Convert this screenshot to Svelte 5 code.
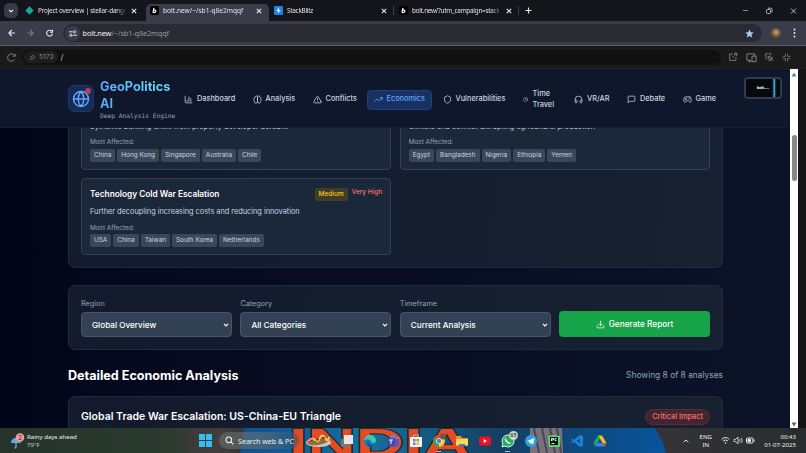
<script lang="ts">
    const tabs = [
        { icon: 'diamond', title: 'Project overview | stellar-dango' },
        { icon: 'bolt', title: 'bolt.new/~/sb1-q8e2mqqf', active: true },
        { icon: 'blitz', title: 'StackBlitz' },
        { icon: 'bolt', title: 'bolt.new/?utm_campaign=stack' },
    ];

    const nav = [
        { label: 'Dashboard', icon: 'chart', width: 68.5 },
        { label: 'Analysis', icon: 'brain', width: 60 },
        { label: 'Conflicts', icon: 'warn', width: 62 },
        { label: 'Economics', icon: 'trend', width: 65, active: true },
        { label: 'Vulnerabilities', icon: 'shield', width: 80 },
        { label: 'Time Travel', icon: 'clock', width: 51.5, wrap: true },
        { label: 'VR/AR', icon: 'phones', width: 53 },
        { label: 'Debate', icon: 'chat', width: 55.5 },
        { label: 'Game', icon: 'pad', width: 50 },
    ];

    const paths: Record<string, string> = {
        chart: 'M3 3v16a2 2 0 0 0 2 2h16M8 17v-3M13 17V5M18 17V9',
        brain: 'M12 5a3 3 0 1 0-6 .1 4 4 0 0 0-2.5 5.8 4 4 0 0 0 .5 6.6A4 4 0 1 0 12 18ZM12 5a3 3 0 1 1 6 .1 4 4 0 0 1 2.5 5.8 4 4 0 0 1-.5 6.6A4 4 0 1 1 12 18Z',
        warn: 'm21.7 18-8-14a2 2 0 0 0-3.5 0l-8 14A2 2 0 0 0 4 21h16a2 2 0 0 0 1.7-3ZM12 9v4M12 17h.01',
        trend: 'M22 7l-8.5 8.5-5-5L2 17M16 7h6v6',
        shield: 'M20 13c0 5-3.5 7.5-7.7 9a1 1 0 0 1-.6 0C7.5 20.5 4 18 4 13V6a1 1 0 0 1 1-1c2 0 4.5-1.2 6.2-2.7a1.2 1.2 0 0 1 1.5 0C14.5 3.8 17 5 19 5a1 1 0 0 1 1 1Z',
        clock: 'M22 12a10 10 0 1 1-20 0 10 10 0 0 1 20 0ZM12 6v6l4 2',
        phones: 'M3 14h3a2 2 0 0 1 2 2v3a2 2 0 0 1-2 2H5a2 2 0 0 1-2-2v-7a9 9 0 0 1 18 0v7a2 2 0 0 1-2 2h-1a2 2 0 0 1-2-2v-3a2 2 0 0 1 2-2h3',
        chat: 'M21 15a2 2 0 0 1-2 2H7l-4 4V5a2 2 0 0 1 2-2h14a2 2 0 0 1 2 2Z',
        pad: 'M6 11h4M8 9v4M15 12h.01M18 10h.01M17.3 5H6.7a4 4 0 0 0-4 3.6L2 16a3 3 0 0 0 5 2l2-2h6l2 2a3 3 0 0 0 5-2l-.7-7.4a4 4 0 0 0-4-3.6Z',
        download: 'M21 15v4a2 2 0 0 1-2 2H5a2 2 0 0 1-2-2v-4M7 10l5 5 5-5M12 15V3',
        globe: 'M22 12a10 10 0 1 1-20 0 10 10 0 0 1 20 0ZM12 2a15 15 0 0 0 0 20 15 15 0 0 0 0-20M2 12h20',
        plug: 'M3 21l4-4M9 8l7 7-2 2c-2 2-5 2-7 0s-2-5 0-7ZM9 8c3-4 7-5 9-2s1 6-2 9',
        external: 'M11 5H4v15h15v-7M15 3h6v6M21 3L11 13',
        devices: 'M10 18H2V4h17v4M6 21h5M14 9h8v12h-8Z',
        inspect: 'M10 10l11 4-5 2-2 5ZM4 12V4h4M12 4h4v3M4 15l3 1M17 17l4 4',
        shrink: 'M9 3v6H3M15 3v6h6M9 21v-6H3M15 21v-6h6',
    };

    const risks = [
        {
            title: 'China Real Estate Collapse',
            text: 'Systemic banking crisis from property developer defaults',
            places: ['China', 'Hong Kong', 'Singapore', 'Australia', 'Chile'],
        },
        {
            title: 'Global Food Crisis',
            text: 'Climate and conflict disrupting agricultural production',
            places: ['Egypt', 'Bangladesh', 'Nigeria', 'Ethiopia', 'Yemen'],
        },
        {
            title: 'Technology Cold War Escalation',
            text: 'Further decoupling increasing costs and reducing innovation',
            places: ['USA', 'China', 'Taiwan', 'South Korea', 'Netherlands'],
        },
    ];

    const filters = [
        { label: 'Region', value: 'Global Overview' },
        { label: 'Category', value: 'All Categories' },
        { label: 'Timeframe', value: 'Current Analysis' },
    ];

    const apps = ['view', 'edge', 'teams', 'store', 'chrome', 'folder', 'youtube', 'whatsapp', 'telegram', 'pycharm', 'vscode', 'drive'];
</script>

{#snippet icon(name: string, size = 9, stroke = 2)}
    <svg width={size} height={size} viewBox="0 0 24 24" fill="none" stroke="currentColor" stroke-width={stroke} stroke-linecap="round" stroke-linejoin="round">
        <path d={paths[name]} />
    </svg>
{/snippet}

{#snippet close()}
    <svg width="6" height="6" viewBox="0 0 6 6" stroke="#e4e4e8" stroke-width="1.1"><path d="M.8.8l4.4 4.4M5.2.8L.8 5.2" /></svg>
{/snippet}

{#snippet favicon(name: string)}
    <svg width="9" height="9" viewBox="0 0 9 9">
        {#if name === 'diamond'}
            <path d="M4.5 .3L8.7 4.5 4.5 8.7.3 4.5Z" fill="#17a3a0" />
        {:else if name === 'bolt'}
            <rect width="9" height="9" rx="2" fill="#000" />
            <path d="M3.9 1.8L3 6.8M3.3 5c.7-1.3 2.7-1 2.5.3S3.8 7 3.2 6.2" fill="none" stroke="#fff" stroke-width="1.2" />
        {:else}
            <rect width="9" height="9" rx="1" fill="#1c80e8" />
            <path d="M5.4 1.3L2.2 5h1.9l-.7 2.8L6.8 4H4.9Z" fill="#fff" />
        {/if}
    </svg>
{/snippet}

<div class="screen">
    <div class="tabstrip">
        <div class="tab-search">
            <svg width="6" height="4" viewBox="0 0 6 4" fill="none" stroke="#fff" stroke-width="1.1"><path d="M1 .8l2 2 2-2" /></svg>
        </div>
        {#each tabs as tab, i}
            <div class="tab" class:active={tab.active} class:divided={i > 1}>
                {@render favicon(tab.icon)}
                <span class="tab-title">{tab.title}</span>
                {@render close()}
            </div>
        {/each}
        <svg class="plus" width="7" height="7" viewBox="0 0 7 7" stroke="#e8e8ec" stroke-width="1.1"><path d="M3.5 .5v6M.5 3.5h6" /></svg>
        <svg class="window-buttons" width="54" height="8" viewBox="0 0 54 8" fill="none" stroke="#c8c8cc" stroke-width=".9">
            <path d="M0 3.5h5" stroke="#96969a" />
            <rect x="23.5" y="2.5" width="4" height="4" rx="1" />
            <path d="M25 1.2h2.8a1.2 1.2 0 0 1 1.2 1.2v3M48 1.5l5 5M53 1.5l-5 5" />
        </svg>
    </div>

    <div class="toolbar">
        <svg width="46" height="8" viewBox="0 0 46 8" fill="none" stroke="#eceaf2" stroke-width="1.1">
            <path d="M7 4H1M3.8 1L.9 4l2.9 3" />
            <path d="M19 4h6M22.2 1l2.9 3-2.9 3" stroke="#7c7b88" />
            <path d="M43.7 2.2A2.9 2.9 0 1 0 44.4 4.6M44.5.8v2.4h-2.4" />
        </svg>
        <div class="address">
            <span class="site">
                <svg width="8" height="7" viewBox="0 0 8 7" fill="none" stroke="#e4e4ea" stroke-width="1"><path d="M0 1.8h3.5M4 5.2h4" /><circle cx="5.5" cy="1.8" r="1.1" /><circle cx="2" cy="5.2" r="1.1" /></svg>
            </span>
            <span class="url">bolt.new<i>/~/sb1-q8e2mqqf</i></span>
            <svg class="star" width="9" height="9" viewBox="0 0 24 24" fill="#a9c8fb"><path d="M12 1l3.3 7.4 8 .8-6 5.4 1.8 8L12 18.4l-7 4.2 1.7-8-6-5.4 8-.8Z" /></svg>
        </div>
        <span class="avatar"></span>
        <svg width="3" height="10" viewBox="0 0 3 10" fill="#e6e6ec"><circle cx="1.5" cy="1.5" r="1" /><circle cx="1.5" cy="5" r="1" /><circle cx="1.5" cy="8.5" r="1" /></svg>
    </div>

    <div class="devbar">
        <svg width="9" height="9" viewBox="0 0 9 9" fill="none" stroke="#8b8b8b" stroke-width=".9"><path d="M7.2 2.2A3.7 3.7 0 1 0 7.6 6.3M8.3.8v2.4H5.9" /></svg>
        <div class="path">
            <span class="port">{@render icon('plug', 7)}5173</span>
            <span class="slash">/</span>
        </div>
        <div class="dev-actions">
            {@render icon('external', 10)}
            {@render icon('devices', 11)}
            {@render icon('inspect', 10)}
            {@render icon('shrink', 9)}
        </div>
    </div>

    <div class="preview">
        <div class="page">
            <header>
                <div class="logo">
                    {@render icon('globe', 18)}
                    <span class="dot"></span>
                </div>
                <div class="brand">
                    <strong>GeoPolitics<br />AI</strong>
                    <small>Deep Analysis Engine</small>
                </div>
                <nav>
                    {#each nav as item}
                        <div class="nav-item" class:active={item.active} class:wrap={item.wrap} style="width: {item.width}px">
                            {@render icon(item.icon, item.wrap ? 5 : 9)}
                            <span>{item.label}</span>
                        </div>
                    {/each}
                </nav>
                <div class="thumbnail">bolt....</div>
            </header>

            <main>
                <section class="risks">
                    {#each risks as risk}
                        <article>
                            <div class="risk-head">
                                <h4>{risk.title}</h4>
                                <span class="level">Medium</span>
                                <span class="impact">Very High</span>
                            </div>
                            <p>{risk.text}</p>
                            <div class="affected">Most Affected:</div>
                            <div class="places">
                                {#each risk.places as place}<span>{place}</span>{/each}
                            </div>
                        </article>
                    {/each}
                </section>

                <section class="filters">
                    {#each filters as filter}
                        <div>
                            <div class="label">{filter.label}</div>
                            <div class="select">
                                {filter.value}
                                <svg width="6" height="4" viewBox="0 0 6 4" fill="none" stroke="#fff" stroke-width="1.1"><path d="M.9.8L3 2.9 5.1.8" /></svg>
                            </div>
                        </div>
                    {/each}
                    <button>{@render icon('download', 9)}Generate Report</button>
                </section>

                <div class="heading">
                    <h2>Detailed Economic Analysis</h2>
                    <span>Showing 8 of 8 analyses</span>
                </div>

                <section class="analysis">
                    <h3>Global Trade War Escalation: US-China-EU Triangle</h3>
                    <span class="critical">Critical Impact</span>
                </section>
            </main>
        </div>
        <div class="scrollbar">
            <svg width="6" height="5" viewBox="0 0 6 5" fill="#7d7d7d"><path d="M3 .5L5.5 4.5h-5Z" /></svg>
            <span class="thumb"></span>
            <svg width="6" height="5" viewBox="0 0 6 5" fill="#606060"><path d="M3 4.5L.5.5h5Z" /></svg>
        </div>
    </div>

    <footer>
        <svg class="wallpaper" width="806" height="25" viewBox="0 0 806 25">
            <defs>
                <linearGradient id="ground"><stop offset="0" stop-color="#26352c" /><stop offset=".2" stop-color="#2a3a2e" /><stop offset=".27" stop-color="#433d3e" /><stop offset=".3" stop-color="#33363a" /><stop offset=".8" stop-color="#35343a" /><stop offset="1" stop-color="#292c2c" /></linearGradient>
                <linearGradient id="shirt"><stop offset="0" stop-color="#124f89" /><stop offset=".3" stop-color="#176f9e" /><stop offset=".6" stop-color="#154061" /><stop offset="1" stop-color="#07549b" /></linearGradient>
            </defs>
            <rect width="806" height="25" fill="url(#ground)" />
            <path d="M244 0h411l8 15 3 10H240Z" fill="url(#shirt)" />
            <path d="M530 0h32l1 25h-33Z" fill="#77717b" />
            <path d="M534 0l5 25M542 0l5 25M550 0l5 25M557 0l4 25" stroke="#4b4750" stroke-width="2" />
            <text class="print" x="289" y="28" textLength="182" lengthAdjust="spacingAndGlyphs">INDIA</text>
        </svg>
        <div class="weather">
            <svg width="15" height="16" viewBox="0 0 15 16">
                <path d="M1 10c0-6 9-7 10 0Z" fill="#6aa9e5" />
                <path d="M6 10v4q0 1.5-1.5 1" fill="none" stroke="#c9d3dc" stroke-width=".9" />
                <circle cx="10" cy="4.5" r="4.3" fill="#f29a9c" />
                <text x="8.3" y="7" font-family="Noto Sans" font-size="6.5" fill="#541c20">2</text>
            </svg>
            <div><b>Rainy days ahead</b><span>79°F</span></div>
        </div>
        <svg width="13" height="13" viewBox="0 0 13 13" fill="#35bdf4"><path d="M0 0h6v6H0ZM7 0h6v6H7ZM0 7h6v6H0ZM7 7h6v6H7Z" /></svg>
        <div class="search">
            <svg width="9" height="9" viewBox="0 0 9 9" fill="none" stroke="#f0f0f0" stroke-width="1.1"><circle cx="3.8" cy="3.8" r="2.8" /><path d="M5.9 5.9L8.3 8.3" /></svg>
            <span>Search web & PC</span>
        </div>
        <svg class="food" width="27" height="14" viewBox="0 0 27 14">
            <ellipse cx="13.5" cy="8.5" rx="12.5" ry="4.5" fill="#c5c9ce" />
            <ellipse cx="13" cy="7" rx="11" ry="4" fill="#a96832" transform="rotate(-8 13 7)" />
            <path d="M4 7q3-4 6-1t5-2 5 0 4-1" fill="none" stroke="#e8d176" stroke-width="2" />
            <path d="M5 7l3-1M11 6l3-1M17 4l3 0" stroke="#c52f20" stroke-width="2" />
            <path d="M8 8h3M15 6h3" stroke="#538936" stroke-width="2" />
        </svg>
        <div class="apps">
            {#each apps as app}
                <span class="app" class:running={app === 'chrome' || app === 'whatsapp'}>
                    <svg width="16" height="16" viewBox="0 0 16 16">
                        {#if app === 'view'}
                            <path d="M2 6h9v8H2Z" fill="#777" /><path d="M5 2h9v9H5Z" fill="#e7e7e7" />
                        {:else if app === 'edge'}
                            <circle cx="8" cy="8" r="6" fill="#1879c9" /><path d="M2 8a6 6 0 0 1 12-.5c0 3-4 3-4.5 1.5C9 6 4 5 2 8Z" fill="#42c6a3" /><path d="M7 7c-2 3 1 6 5 5-3 3-7 1-7-2Z" fill="#075494" />
                        {:else if app === 'teams'}
                            <circle cx="8" cy="4" r="2.5" fill="#737be2" /><circle cx="12.5" cy="5" r="1.5" fill="#737be2" /><rect x="5" y="6" width="9" height="8" rx="3" fill="#5059c9" /><rect x="2" y="5" width="8" height="8" rx="1" fill="#4147a8" /><path d="M4 7h4M6 7v4" stroke="#fff" />
                        {:else if app === 'store'}
                            <path d="M2 4h12v9a1 1 0 0 1-1 1H3a1 1 0 0 1-1-1Z" fill="#f2f2f2" /><path d="M5.5 4V2h5v2" fill="none" stroke="#70c6ed" /><path d="M5 6h2.5v2.5H5Z" fill="#ef5536" /><path d="M8.5 6H11v2.5H8.5Z" fill="#75b943" /><path d="M5 9.5h2.5V12H5Z" fill="#2199e8" /><path d="M8.5 9.5H11V12H8.5Z" fill="#f6bc31" />
                        {:else if app === 'chrome'}
                            <circle cx="8" cy="8" r="6" fill="#e94335" /><path d="M8 8L2.8 5A6 6 0 0 0 8 14l3-5Z" fill="#2da451" /><path d="M8 8v6a6 6 0 0 0 5.2-9H8Z" fill="#f9c72d" /><circle cx="8" cy="8" r="2.8" fill="#fff" /><circle cx="8" cy="8" r="2.2" fill="#3d83ee" /><circle cx="12" cy="3.5" r="3" fill="#685b43" />
                        {:else if app === 'folder'}
                            <path d="M2 3h5l1 2h6v8H2Z" fill="#dc9d23" /><path d="M2 6h12v6H2Z" fill="#ffd760" /><path d="M5 11h6v2H5Z" fill="#3188cf" />
                        {:else if app === 'youtube'}
                            <rect x="2" y="3.5" width="12" height="9" rx="2.2" fill="#f20e28" /><path d="M6.7 6v4L10 8Z" fill="#fff" />
                        {:else if app === 'whatsapp'}
                            <path d="M2 14l.9-3A6 6 0 1 1 5 13.1Z" fill="#24ad61" stroke="#e7f3e9" /><path d="M5.5 5.5c-.5 2 2.5 5 4.8 4.7" fill="none" stroke="#fff" stroke-width="1.5" />
                        {:else if app === 'telegram'}
                            <circle cx="8" cy="8" r="6" fill="#2ca1dc" /><path d="M4 8l7.5-3-1.4 6.5-2-1.5-1.2 1-.4-2 3-2.5-3.8 2.3Z" fill="#fff" />
                        {:else if app === 'pycharm'}
                            <path d="M2 3l6-1 6 1v11H3Z" fill="#56d66f" /><path d="M4 4h8v8H4Z" fill="#06120a" /><path d="M5.5 8V5.5h2V7h-2M10.5 5.5H9v2h1.5M5.5 10.5h3" fill="none" stroke="#fff" stroke-width=".9" />
                        {:else if app === 'vscode'}
                            <path d="M11 2l3 1.3v9.4L11 14 5 8.9 3 10.5 2 9.8 4 8 2 6.2l1-.7L5 7.1ZM11 5.5L7.5 8l3.5 2.5Z" fill="#1687d4" fill-rule="evenodd" />
                        {:else}
                            <path d="M6 2.5h4l4.5 7.5h-4Z" fill="#f9bd1c" /><path d="M6 2.5L1.5 10l2 3.5 4.5-7.5Z" fill="#22a467" /><path d="M5.5 10h9l-2 3.5h-9Z" fill="#427eea" /><path d="M10.5 10h4l-2 3.5Z" fill="#df4a35" />
                        {/if}
                    </svg>
                    {#if app === 'whatsapp'}<em>65</em>{/if}
                </span>
            {/each}
        </div>
        <div class="tray">
            <svg width="6" height="4" viewBox="0 0 6 4" fill="none" stroke="#eee" stroke-width="1"><path d="M.6 3.3L3 .9l2.4 2.4" /></svg>
            <span class="lang">ENG<br />IN</span>
            <svg width="34" height="9" viewBox="0 0 34 9" fill="none" stroke="#eee" stroke-width="1">
                <path d="M.8 3.3q3.7-3.5 7.4 0" /><path d="M2.2 5q2.3-2.1 4.6 0" /><circle cx="4.5" cy="7" r=".8" fill="#eee" stroke="none" />
                <path d="M13 3.4h1.5L17 1.2v6.6L14.5 5.6H13Z" stroke-width=".8" /><path d="M18.5 3.2q1 1.3 0 2.6M20 1.8q2.4 2.7 0 5.4" stroke-width=".8" />
                <rect x="25.5" y="2" width="6.5" height="5" rx="1" /><path d="M27 3.5h2.5v2H27Z" fill="#eee" /><path d="M33 3.5v2" />
            </svg>
            <span class="time">00:43<br />01-07-2025</span>
        </div>
    </footer>
</div>

<style>
    :global(body) {
        margin: 0;
        background: #111;
    }

    .screen {
        width: 806px;
        height: 453px;
        overflow: hidden;
        display: flex;
        flex-direction: column;
        font-family: Inter, 'Liberation Sans', sans-serif;
        box-sizing: border-box;
    }

    .screen :global(*) {
        box-sizing: border-box;
    }

    svg {
        display: block;
        flex: none;
    }

    .tabstrip {
        height: 21px;
        flex: none;
        display: flex;
        align-items: center;
        background: #14151b;
        font-family: 'Noto Sans', sans-serif;
    }

    .tab-search {
        width: 14px;
        height: 15px;
        margin: 0 3px 0 4px;
        border-radius: 5px;
        background: #393a49;
        display: flex;
        align-items: center;
        justify-content: center;
    }

    .tab {
        width: 125px;
        height: 17px;
        display: flex;
        align-items: center;
        padding: 0 9px 3px 4px;
        margin-top: 3px;
    }

    .tab.active {
        width: 123px;
        background: #3b3c49;
        border-radius: 5px 5px 0 0;
        padding-right: 7px;
    }

    .tab.divided {
        height: 9px;
        margin-top: 0;
        padding: 0 6px 0 5px;
        border-right: 1px solid #3d3e4a;
    }

    .tab-title {
        flex: 1;
        min-width: 0;
        margin: 0 4px;
        overflow: hidden;
        white-space: nowrap;
        font-size: 6.4px;
        letter-spacing: -0.2px;
        line-height: 12px;
        color: #e3e3e7;
        mask-image: linear-gradient(90deg, #000 88%, transparent);
    }

    .active .tab-title {
        margin-left: 4px;
        font-size: 6.6px;
        letter-spacing: 0;
    }

    .divided .tab-title {
        letter-spacing: -0.26px;
    }

    .plus {
        margin-left: 6px;
    }

    .window-buttons {
        margin-left: auto;
        margin-right: 9px;
    }

    .toolbar {
        height: 25px;
        flex: none;
        display: flex;
        align-items: center;
        padding: 0 10px 0 8px;
        background: #3b3c49;
        border-bottom: 1px solid #5a5c63;
        font-family: 'Noto Sans', sans-serif;
    }

    .address {
        flex: 1;
        height: 18px;
        margin: 0 8px 0 9px;
        border-radius: 9px;
        background: #2a2a33;
        display: flex;
        align-items: center;
        padding: 0 8px 0 2px;
    }

    .site {
        width: 15px;
        height: 15px;
        border-radius: 50%;
        background: #3b3c48;
        display: flex;
        align-items: center;
        justify-content: center;
    }

    .url {
        margin-left: 2.5px;
        font-size: 7.4px;
        letter-spacing: -0.16px;
        line-height: 12px;
        color: #f0f0f4;
    }

    .url i {
        font-style: normal;
        color: #9696a2;
    }

    .star {
        margin-left: auto;
    }

    .avatar {
        width: 11px;
        height: 11px;
        margin-right: 12px;
        border-radius: 50%;
        background: radial-gradient(circle at 55% 40%, #ad9274 15%, #6c552c 45%, #3d3422 80%);
    }

    .devbar {
        height: 23px;
        flex: none;
        display: flex;
        align-items: center;
        padding: 0 15px 0 7px;
        background: #1a1a1a;
        color: #8b8b8b;
        border-bottom: 1px solid #222;
    }

    .path {
        width: 699px;
        height: 15px;
        margin-left: 6px;
        border-radius: 8px;
        background: #101010;
        display: flex;
        align-items: center;
        padding-left: 2px;
        font-size: 6.7px;
    }

    .port {
        height: 12px;
        display: flex;
        align-items: center;
        gap: 3px;
        padding: 0 4px 0 5px;
        border-radius: 6px;
        background: #1d1d1d;
    }

    .slash {
        margin-left: 3px;
        font-size: 8px;
        color: #bbb;
    }

    .dev-actions {
        flex: 1;
        display: flex;
        align-items: center;
        justify-content: space-between;
        padding-left: 7px;
    }

    .preview {
        flex: 1;
        min-height: 0;
        display: flex;
        background: #151515;
    }

    .page {
        width: 790px;
        display: flex;
        flex-direction: column;
        overflow: hidden;
        background: linear-gradient(90deg, #020619 0, #070c20 40%, #0c1328 100%);
    }

    header {
        height: 59px;
        flex: none;
        display: flex;
        align-items: center;
        padding: 1px 8px 0 68px;
        background: #0e172b;
        border-bottom: 1px solid #141e36;
    }

    .logo {
        position: relative;
        width: 26px;
        height: 27px;
        border-radius: 6px;
        border: 1px solid #1f3764;
        background: #172b55;
        color: #60a5fa;
        display: flex;
        align-items: center;
        justify-content: center;
    }

    .dot {
        position: absolute;
        top: 2px;
        right: 2px;
        width: 6px;
        height: 6px;
        border-radius: 50%;
        background: #ae454f;
    }

    .brand {
        width: 76px;
        margin-left: 6px;
        padding-top: 1px;
    }

    .brand strong {
        display: block;
        font-size: 12.7px;
        line-height: 17px;
        color: #60a5fa;
        background: linear-gradient(90deg, #60a5fa, #67e8f9);
        background-clip: text;
        -webkit-text-fill-color: transparent;
    }

    .brand small {
        display: block;
        font: 6.25px/8px 'DejaVu Sans Mono', monospace;
        color: #94a3b8;
        white-space: nowrap;
    }

    nav {
        display: flex;
        align-items: center;
        margin-left: -1px;
        padding-top: 2px;
    }

    .nav-item {
        height: 20px;
        display: flex;
        align-items: center;
        gap: 4px;
        padding-left: 8px;
        border-radius: 4px;
        border: 1px solid transparent;
        font-size: 7.35px;
        font-weight: 500;
        line-height: 10.5px;
        white-space: nowrap;
        color: #cbd5e1;
    }

    .nav-item.active {
        background: #173163;
        border-color: #1f4078;
        color: #60a5fa;
        padding-left: 6px;
        margin-left: 1px;
        margin-right: 2px;
    }

    .nav-item.wrap {
        gap: 5px;
        white-space: normal;
    }

    .thumbnail {
        width: 38px;
        height: 22px;
        margin: -22px 0 0 auto;
        border: 2px solid #343b4c;
        border-radius: 4px;
        background: linear-gradient(90deg, #05080d 76%, #0a3c5e 80%, #7bcaf1 83%, #0a3c5e 86%, #05080d 91%);
        display: flex;
        align-items: center;
        padding-left: 11px;
        font-size: 3.6px;
        font-weight: 800;
        color: #fff;
    }

    main {
        flex: 1;
        min-height: 0;
        overflow: hidden;
        padding: 0 67px 0 68px;
        display: flex;
        flex-direction: column;
    }

    section {
        flex: none;
        border: 1px solid #202b3d;
        border-radius: 7px;
        background: linear-gradient(100deg, #121a2c, #172131);
    }

    .risks {
        margin-top: -48.5px;
        padding: 12px;
        display: grid;
        grid-template-columns: 1fr 1fr;
        gap: 8.5px;
    }

    article {
        height: 77px;
        border: 1px solid #334155;
        border-radius: 4px;
        background: #1b2839;
        padding: 8.5px 8px;
    }

    .risk-head {
        display: flex;
        height: 13px;
    }

    h4 {
        flex: 1;
        margin: 0;
        font-size: 8.3px;
        font-weight: 600;
        line-height: 13px;
        color: #fff;
    }

    .level {
        height: 13px;
        padding: 0 4px;
        border-radius: 2px;
        background: #423c27;
        color: #facc15;
        font-size: 6.5px;
        font-weight: 500;
        line-height: 13px;
    }

    .impact {
        margin-left: 4px;
        font-size: 6.5px;
        font-weight: 500;
        line-height: 9px;
        color: #f87171;
    }

    p {
        margin: 5.5px 0;
        font-size: 7.33px;
        line-height: 11px;
        color: #cbd5e1;
    }

    .affected {
        font-size: 6.4px;
        line-height: 10px;
        color: #94a3b8;
        margin-bottom: 1.5px;
    }

    .places {
        display: flex;
        gap: 2px;
    }

    .places span {
        height: 13px;
        padding: 0 4px;
        border-radius: 2px;
        background: #3a4758;
        color: #cbd5e1;
        font-size: 6.4px;
        line-height: 13px;
    }

    .filters {
        height: 65px;
        margin-top: 16.5px;
        padding: 13px 12px 12px;
        display: grid;
        grid-template-columns: repeat(4, 1fr);
        gap: 8.5px;
    }

    .label {
        font-size: 7.3px;
        line-height: 10px;
        margin-bottom: 3.5px;
        color: #94a3b8;
    }

    .select {
        height: 25px;
        border: 1px solid #475569;
        border-radius: 4px;
        background: #334155;
        padding: 0 2px 0 10px;
        display: flex;
        align-items: center;
        justify-content: space-between;
        font-size: 8.2px;
        font-weight: 500;
        color: #fff;
    }

    button {
        height: 26px;
        margin: 12.5px 0 0;
        padding: 0;
        border: 0;
        border-radius: 4px;
        background: #16a34a;
        color: #fff;
        display: flex;
        align-items: center;
        justify-content: center;
        gap: 4px;
        font: 500 8.25px Inter, sans-serif;
    }

    .heading {
        height: 46px;
        flex: none;
        display: flex;
        align-items: center;
        justify-content: space-between;
        padding-top: 5px;
        color: #94a3b8;
        font-size: 8.4px;
    }

    h2 {
        margin: 0;
        font-size: 12.58px;
        line-height: 17px;
        font-weight: 700;
        color: #fff;
    }

    .analysis {
        height: 60px;
        padding: 12px;
        display: flex;
        align-items: flex-start;
        justify-content: space-between;
    }

    h3 {
        margin: 0;
        font-size: 10.5px;
        line-height: 16px;
        font-weight: 600;
        color: #fff;
    }

    .critical {
        height: 16px;
        padding: 0 6px;
        border: 1px solid #582c39;
        border-radius: 8px;
        background: #432431;
        color: #f87171;
        font-size: 7.35px;
        font-weight: 500;
        line-height: 14px;
    }

    .scrollbar {
        width: 8px;
        background: #fff;
        display: flex;
        flex-direction: column;
        align-items: center;
        padding: 3px 0 1px;
    }

    .thumb {
        width: 5px;
        height: 46px;
        margin: 58px 0 auto;
        border-radius: 3px;
        background: #888;
    }

    footer {
        position: relative;
        height: 25px;
        flex: none;
        display: flex;
        align-items: center;
        overflow: hidden;
        color: #f0f0f0;
        font-family: 'Noto Sans', sans-serif;
    }

    .wallpaper {
        position: absolute;
        inset: 0;
    }

    .print {
        font: 700 39px 'Liberation Sans', sans-serif;
        fill: #e64a21;
        stroke: #14303a;
        stroke-width: 2px;
        paint-order: stroke;
    }

    footer > :not(.wallpaper) {
        position: relative;
    }

    .weather {
        width: 189px;
        margin-left: 10px;
        display: flex;
        align-items: center;
        gap: 2px;
        font-size: 6.1px;
        line-height: 8px;
    }

    .weather b,
    .weather span {
        display: block;
        font-weight: 400;
    }

    .weather span {
        color: #c1c5c2;
    }

    .search {
        width: 80px;
        height: 17px;
        margin-left: 7px;
        border-radius: 9px;
        padding-left: 6px;
        display: flex;
        align-items: center;
        gap: 4px;
        background: linear-gradient(90deg, rgba(110, 116, 113, 0.55) 50%, rgba(40, 85, 120, 0.5));
        font-size: 7.1px;
        white-space: nowrap;
    }

    .food {
        margin-left: 6px;
    }

    .apps {
        margin-left: 3px;
        display: flex;
    }

    .app {
        position: relative;
        width: 23px;
        height: 25px;
        display: flex;
        align-items: center;
        justify-content: center;
    }

    .running::after {
        content: '';
        position: absolute;
        bottom: 1px;
        width: 5px;
        height: 1px;
        background: #b4b4b4;
    }

    .app em {
        position: absolute;
        top: 3px;
        right: 1px;
        width: 9px;
        height: 9px;
        border-radius: 50%;
        background: #c8d7c6;
        color: #111;
        font-size: 5.5px;
        font-style: normal;
        line-height: 9px;
        text-align: center;
    }

    .tray {
        margin-left: auto;
        margin-right: 10px;
        display: flex;
        align-items: center;
        font-size: 6.1px;
        line-height: 8px;
    }

    .lang {
        margin: 0 9px 0 11px;
        text-align: center;
    }

    .time {
        width: 41px;
        text-align: right;
    }
</style>
